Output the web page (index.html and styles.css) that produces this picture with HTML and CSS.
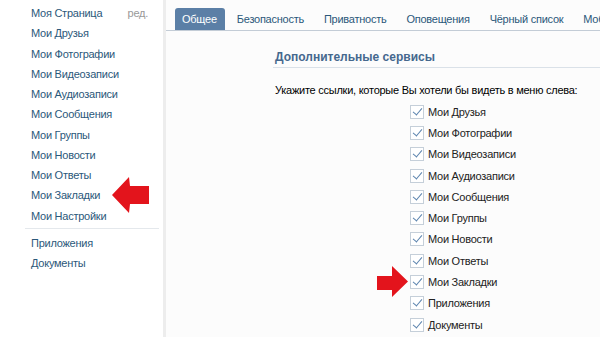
FILE: index.html
```html
<!DOCTYPE html>
<html>
<head>
  <title>Мои Настройки</title>
  <link rel="stylesheet" href="styles.css">
</head>
<body>

  <div class="page">

    <aside class="sidebar">
      <ul class="menu">
        <li><a href="#">Моя Страница</a><a href="#" class="edit">ред.</a></li>
        <li><a href="#">Мои Друзья</a></li>
        <li><a href="#">Мои Фотографии</a></li>
        <li><a href="#">Мои Видеозаписи</a></li>
        <li><a href="#">Мои Аудиозаписи</a></li>
        <li><a href="#">Мои Сообщения</a></li>
        <li><a href="#">Мои Группы</a></li>
        <li><a href="#">Мои Новости</a></li>
        <li><a href="#">Мои Ответы</a></li>
        <li><a href="#">Мои Закладки</a></li>
        <li><a href="#">Мои Настройки</a></li>
      </ul>

      <div class="sep"></div>

      <ul class="menu">
        <li><a href="#">Приложения</a></li>
        <li><a href="#">Документы</a></li>
      </ul>

      <!-- red pointer next to "Мои Закладки" -->
      <svg class="arrow arrow-left" width="38" height="36" viewBox="0 0 38 36">
        <polygon points="0,18 17,0 18,9 37,9 37,27 18,27 17,36" fill="#e3141c"/>
      </svg>
    </aside>

    <main class="content">

      <nav class="tabs">
        <a href="#" class="tab active">Общее</a>
        <a href="#" class="tab">Безопасность</a>
        <a href="#" class="tab">Приватность</a>
        <a href="#" class="tab">Оповещения</a>
        <a href="#" class="tab">Чёрный список</a>
        <a href="#" class="tab">Мобильные</a>
      </nav>

      <section class="settings">
        <h2>Дополнительные сервисы</h2>

        <p class="hint">Укажите ссылки, которые Вы хотели бы видеть в меню слева:</p>

        <ul class="checks">
          <li><span class="box"></span>Мои Друзья</li>
          <li><span class="box"></span>Мои Фотографии</li>
          <li><span class="box"></span>Мои Видеозаписи</li>
          <li><span class="box"></span>Мои Аудиозаписи</li>
          <li><span class="box"></span>Мои Сообщения</li>
          <li><span class="box"></span>Мои Группы</li>
          <li><span class="box"></span>Мои Новости</li>
          <li><span class="box"></span>Мои Ответы</li>
          <li>
            <svg class="arrow arrow-right" width="31" height="31" viewBox="0 0 31 31">
              <polygon points="31,15.5 15,0 15,10 0,10 0,24 15,24 15,31" fill="#e3141c"/>
            </svg>
            <span class="box"></span>Мои Закладки
          </li>
          <li><span class="box"></span>Приложения</li>
          <li><span class="box"></span>Документы</li>
        </ul>
      </section>

    </main>

  </div>

</body>
</html>
```

FILE: styles.css
```css
body {
  margin: 0;
  font-family: 'Liberation Sans', Arial, sans-serif;
  font-size: 11px;
  letter-spacing: -0.25px;
  color: #222;
  background: #fff;
}

a {
  color: #2b587a;
  text-decoration: none;
}

ul {
  list-style: none;
  margin: 0;
  padding: 0;
}

.page {
  display: flex;
  height: 337px;
  overflow: hidden;
}

/* left menu */

.sidebar {
  position: relative;
  width: 163px;
  flex-shrink: 0;
  border-right: 3px solid #ededed;
  padding-top: 3px;
}

.menu {
  padding-left: 31px;
}

.menu li {
  display: flex;
  line-height: 20.25px;
}

.menu .edit {
  margin-left: auto;
  margin-right: 15px;
  color: #999;
}

.sep {
  height: 1px;
  background: #e4e8ec;
  margin: 2px 4px 4px 25px;
}

.arrow {
  position: absolute;
}

.arrow-left {
  left: 112px;
  top: 177px;
}

/* content */

.content {
  flex: 1;
  min-width: 0;
  background: #fcfcfc;
}

.tabs {
  display: flex;
  padding: 8px 0 0 9px;
  border-bottom: 1px solid #c3ccd6;
  white-space: nowrap;
  overflow: hidden;
}

.tab {
  line-height: 22px;
  padding: 0 8px 0 7px;
  margin-right: 5px;
  border-radius: 3px 3px 0 0;
}

.tab.active {
  background: #5b7fa6;
  color: #fff;
}

.settings {
  padding-left: 107px;
}

.settings h2 {
  margin: 18px 0 0;
  padding: 0 2px 2px;
  font-size: 12px;
  line-height: 16px;
  letter-spacing: 0;
  color: #45688e;
  border-bottom: 1px solid #dae1e8;
}

.hint {
  margin: 15px 0 0 2px;
  line-height: 14px;
  color: #000;
}

.checks {
  margin: 4px 0 0 137px;
}

.checks li {
  position: relative;
  display: flex;
  align-items: center;
  height: 21.3px;
}

.box {
  position: relative;
  width: 12px;
  height: 12px;
  margin-right: 4px;
  border: 1px solid #c5cfd9;
  background: #fff;
}

/* check mark */
.box::after {
  content: '';
  position: absolute;
  left: 4px;
  top: 0px;
  width: 4px;
  height: 8px;
  border: solid #5b83ae;
  border-width: 0 1.5px 1.5px 0;
  transform: rotate(40deg);
}

.arrow-right {
  left: -33px;
  top: -5px;
}
```
